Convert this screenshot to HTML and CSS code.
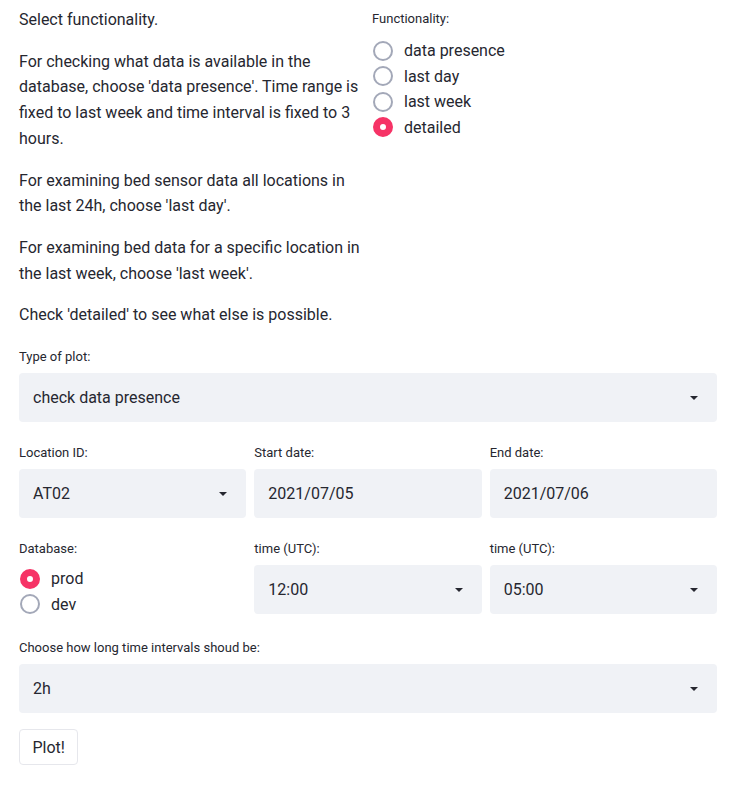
FILE: index.html
```html
<!DOCTYPE html>
<html>
<head>
<meta charset="utf-8">
<link rel="stylesheet" href="styles.css">
</head>
<body>
<main class="page">
  <section class="cols2">
    <div class="intro">
      <p>Select functionality.</p>
      <p>For checking what data is available in the database, choose 'data presence'. Time range is fixed to last week and time interval is fixed to 3 hours.</p>
      <p>For examining bed sensor data all locations in the last 24h, choose 'last day'.</p>
      <p>For examining bed data for a specific location in the last week, choose 'last week'.</p>
      <p>Check 'detailed' to see what else is possible.</p>
    </div>
    <div class="field">
      <div class="label">Functionality:</div>
      <div class="radios">
        <div class="radio"><span class="dot"></span><span>data presence</span></div>
        <div class="radio"><span class="dot"></span><span>last day</span></div>
        <div class="radio"><span class="dot"></span><span>last week</span></div>
        <div class="radio on"><span class="dot"></span><span>detailed</span></div>
      </div>
    </div>
  </section>

  <div class="field row">
    <div class="label">Type of plot:</div>
    <div class="box select"><span>check data presence</span><svg class="caret" width="8" height="4" viewBox="0 0 8 4"><path d="M0 0h8L4 4z" fill="#262730"/></svg></div>
  </div>

  <section class="cols3 row">
    <div class="field">
      <div class="label">Location ID:</div>
      <div class="box select"><span>AT02</span><svg class="caret" width="8" height="4" viewBox="0 0 8 4"><path d="M0 0h8L4 4z" fill="#262730"/></svg></div>
    </div>
    <div class="field">
      <div class="label">Start date:</div>
      <div class="box"><span>2021/07/05</span></div>
    </div>
    <div class="field">
      <div class="label">End date:</div>
      <div class="box"><span>2021/07/06</span></div>
    </div>
  </section>

  <section class="cols3 row dbrow">
    <div class="field">
      <div class="label">Database:</div>
      <div class="radios db">
        <div class="radio on"><span class="dot"></span><span>prod</span></div>
        <div class="radio"><span class="dot"></span><span>dev</span></div>
      </div>
    </div>
    <div class="field">
      <div class="label">time (UTC):</div>
      <div class="box select"><span>12:00</span><svg class="caret" width="8" height="4" viewBox="0 0 8 4"><path d="M0 0h8L4 4z" fill="#262730"/></svg></div>
    </div>
    <div class="field">
      <div class="label">time (UTC):</div>
      <div class="box select"><span>05:00</span><svg class="caret" width="8" height="4" viewBox="0 0 8 4"><path d="M0 0h8L4 4z" fill="#262730"/></svg></div>
    </div>
  </section>

  <div class="field row last">
    <div class="label">Choose how long time intervals shoud be:</div>
    <div class="box select"><span>2h</span><svg class="caret" width="8" height="4" viewBox="0 0 8 4"><path d="M0 0h8L4 4z" fill="#262730"/></svg></div>
  </div>

  <button class="btn">Plot!</button>
</main>
</body>
</html>
```

FILE: styles.css
```css
* { box-sizing: border-box; }
html, body { margin: 0; background: #ffffff; }
body {
  font-family: Roboto, "Noto Sans", sans-serif;
  color: #262730;
  font-size: 16px;
}
.page {
  width: 698px;
  margin-left: 19px;
  padding-top: 7px;
}
.cols2 {
  display: grid;
  grid-template-columns: 1fr 1fr;
  gap: 8px;
}
.cols3 {
  display: grid;
  grid-template-columns: 1fr 1fr 1fr;
  gap: 8px;
}
.intro p {
  margin: 0 0 16px 0;
  line-height: 25.7px;
}
.intro { padding-bottom: 2px; }
.label {
  font-size: 13px;
  line-height: 22px;
  height: 22px;
  margin-bottom: 5px;
}
.cols2 .field { padding-top: 1px; }
.row { margin-bottom: 20px; }
.row.dbrow { margin-bottom: 23px; }
.box {
  background: #f0f2f6;
  border-radius: 4px;
  height: 49px;
  display: flex;
  align-items: center;
  justify-content: space-between;
  padding: 0 19px 0 14px;
  font-size: 16px;
}
.caret { flex: none; }
.radios { display: flex; flex-direction: column; padding-top: 3px; }
.radios.db { padding-top: 1px; height: 49px; }
.radio {
  display: flex;
  align-items: center;
  height: 25.5px;
  line-height: 25.5px;
  font-size: 16px;
  flex: none;
}
.dot {
  width: 20px;
  height: 20px;
  border-radius: 50%;
  border: 2px solid #a3a8b8;
  margin-left: 1px;
  margin-right: 11px;
  flex: none;
  background: #fff;
}
.radio.on .dot {
  border: 7px solid #f63366;
  background: #ffffff;
}
.row.last { margin-bottom: 16px; }
.btn {
  display: block;
  font-family: inherit;
  font-size: 16px;
  color: #262730;
  background: #ffffff;
  border: 1px solid #e6e7ec;
  border-radius: 4px;
  height: 36px;
  padding: 0 12.5px;
}
```
